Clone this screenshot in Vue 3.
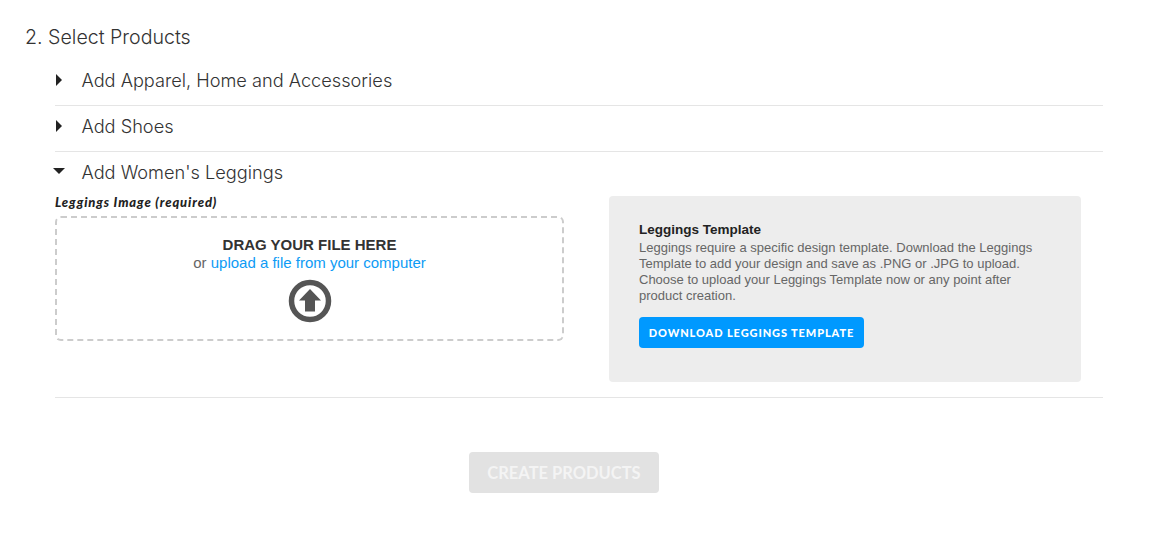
<template>
  <div class="page">
    <h2 class="step-title">2. Select Products</h2>

    <div class="product-list">
      <div v-for="item in closedGroups" :key="item" class="group">
        <div class="group-head">
          <span class="caret right"></span>
          <span class="group-name">{{ item }}</span>
        </div>
      </div>

      <div class="group open">
        <div class="group-head">
          <span class="caret down"></span>
          <span class="group-name">Add Women's Leggings</span>
        </div>

        <div class="group-body">
          <div class="upload-col">
            <label class="upload-label">Leggings Image (required)</label>
            <div class="dropzone">
              <strong class="drop-title">DRAG YOUR FILE HERE</strong>
              <p class="drop-sub">or <a class="drop-link">upload a file from your computer</a></p>
              <svg class="upload-icon" width="44" height="44" viewBox="0 0 44 44">
                <circle cx="22" cy="22" r="18.5" fill="none" stroke="#555" stroke-width="5.5" />
                <path d="M22 10 L33 21.5 H27 V32.5 H17 V21.5 H11 Z" fill="#555" />
              </svg>
            </div>
          </div>

          <div class="template-box">
            <h4 class="template-title">Leggings Template</h4>
            <p class="template-text">
              Leggings require a specific design template. Download the Leggings<br />
              Template to add your design and save as .PNG or .JPG to upload.<br />
              Choose to upload your Leggings Template now or any point after<br />
              product creation.
            </p>
            <button class="download-btn">DOWNLOAD LEGGINGS TEMPLATE</button>
          </div>
        </div>
      </div>
    </div>

    <div class="actions">
      <button class="create-btn" disabled>CREATE PRODUCTS</button>
    </div>
  </div>
</template>

<script setup>
const closedGroups = ['Add Apparel, Home and Accessories', 'Add Shoes']
</script>

<style>
html,
body {
  background: #fff;
}
</style>

<style scoped>
.page {
  width: 1164px;
  height: 534px;
  box-sizing: border-box;
  padding: 23px 61px 0 25px;
  overflow: hidden;
  font-family: "Liberation Sans", Arial, sans-serif;
  color: #333;
}

.step-title {
  margin: 0 0 9px;
  font-family: Inter, "Liberation Sans", sans-serif;
  font-size: 19.6px;
  line-height: 28px;
  font-weight: 300;
  color: #333;
}

.product-list {
  margin-left: 30px;
}

.group {
  border-bottom: 1px solid #e5e5e5;
}

.group-head {
  box-sizing: border-box;
  display: flex;
  align-items: center;
  height: 45px;
  padding: 8px 0 13px;
}

.open .group-head {
  height: 44px;
  padding-bottom: 12px;
}

.group-name {
  font-family: Inter, "Liberation Sans", sans-serif;
  font-size: 18.2px;
  line-height: 24px;
  font-weight: 300;
  color: #333;
}

.caret {
  width: 26.5px;
  flex: none;
  position: relative;
  height: 12px;
}

.caret::before {
  content: "";
  position: absolute;
  width: 0;
  height: 0;
}

.caret.right::before {
  left: 1px;
  top: 0;
  border-top: 6px solid transparent;
  border-bottom: 6px solid transparent;
  border-left: 6px solid #222;
}

.caret.down::before {
  left: -2px;
  top: 2px;
  border-left: 6px solid transparent;
  border-right: 6px solid transparent;
  border-top: 6px solid #222;
}

.group-body {
  display: flex;
  align-items: flex-start;
  padding-bottom: 15px;
}

.upload-col {
  width: 509px;
  flex: none;
  margin-right: 45px;
}

.upload-label {
  display: block;
  height: 20px;
  font-family: Lato, sans-serif;
  font-size: 13px;
  line-height: 13px;
  font-weight: 900;
  font-style: italic;
  letter-spacing: 0.88px;
  color: #222;
}

.dropzone {
  box-sizing: border-box;
  height: 125px;
  border: 2px dashed #ccc;
  border-radius: 6px;
  padding: 18px 0 0;
  display: flex;
  flex-direction: column;
  align-items: center;
}

.drop-title {
  font-size: 15px;
  line-height: 17px;
  font-weight: 700;
  color: #333;
}

.drop-sub {
  margin: 1px 0 0;
  font-size: 15px;
  line-height: 18px;
  color: #666;
}

.drop-link {
  color: #0d9bf5;
}

.upload-icon {
  margin-top: 7px;
}

.template-box {
  box-sizing: border-box;
  width: 472px;
  height: 186px;
  padding: 24px 30px 0;
  background: #ededed;
  border-radius: 4px;
}

.template-title {
  margin: 0;
  font-size: 13.5px;
  line-height: 20px;
  font-weight: 700;
  color: #222;
}

.template-text {
  margin: 0 0 13px;
  font-size: 13px;
  line-height: 16px;
  color: #666;
  white-space: nowrap;
}

.download-btn {
  display: block;
  width: 225px;
  height: 31px;
  padding: 0;
  border: 0;
  border-radius: 4px;
  background: #0099ff;
  color: #fff;
  font-family: Lato, sans-serif;
  font-size: 11px;
  font-weight: 900;
  letter-spacing: 0.9px;
}

.actions {
  display: flex;
  justify-content: center;
  padding: 54px 0 0;
}

.create-btn {
  width: 190px;
  height: 41px;
  padding: 0;
  border: 0;
  border-radius: 4px;
  background: #e2e2e2;
  color: #f4f4f4;
  font-family: Lato, sans-serif;
  font-size: 16.5px;
  font-weight: 700;
}
</style>
